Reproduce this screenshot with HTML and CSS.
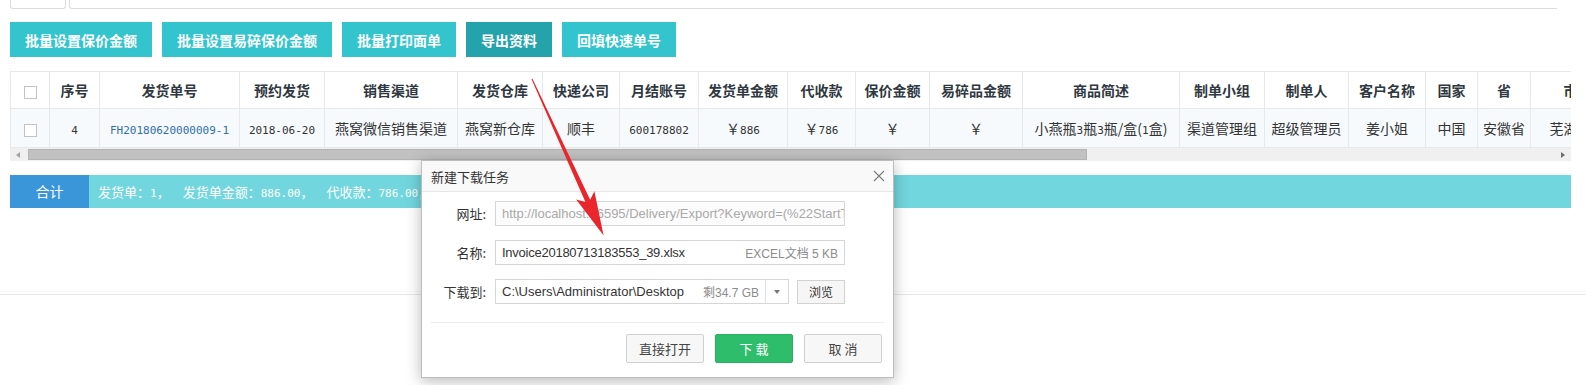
FILE: index.html
```html
<!DOCTYPE html>
<html lang="zh-CN">
<head>
  <meta charset="UTF-8" />
  <meta name="viewport" content="width=device-width, initial-scale=1.0" />
  <title>发货单</title>
  <link rel="stylesheet" href="styles.css">
</head>
<body>
  <div class="page">
    <div class="topbar">
      <div class="tab"></div>
      <div class="tab-line"></div>
    </div>

    <div class="toolbar">
      <button class="btn">批量设置保价金额</button>
      <button class="btn">批量设置易碎保价金额</button>
      <button class="btn">批量打印面单</button>
      <button class="btn btn-dark">导出资料</button>
      <button class="btn">回填快速单号</button>
    </div>

    <div class="grid">
      <table>
        <colgroup>
          <col style="width:39px"><col style="width:50px"><col style="width:140px"><col style="width:85px">
          <col style="width:133px"><col style="width:85px"><col style="width:77px"><col style="width:79px">
          <col style="width:89px"><col style="width:68px"><col style="width:74px"><col style="width:93px">
          <col style="width:157px"><col style="width:85px"><col style="width:84px"><col style="width:77px">
          <col style="width:52px"><col style="width:53px"><col style="width:80px">
        </colgroup>
        <thead>
          <tr>
            <th><span class="chk"></span></th>
            <th>序号</th>
            <th>发货单号</th>
            <th>预约发货</th>
            <th>销售渠道</th>
            <th>发货仓库</th>
            <th>快递公司</th>
            <th>月结账号</th>
            <th>发货单金额</th>
            <th>代收款</th>
            <th>保价金额</th>
            <th>易碎品金额</th>
            <th>商品简述</th>
            <th>制单小组</th>
            <th>制单人</th>
            <th>客户名称</th>
            <th>国家</th>
            <th>省</th>
            <th>市</th>
          </tr>
        </thead>
        <tbody>
          <tr>
            <td><span class="chk"></span></td>
            <td><span class="num">4</span></td>
            <td><a class="num link" href="#">FH20180620000009-1</a></td>
            <td><span class="num">2018-06-20</span></td>
            <td>燕窝微信销售渠道</td>
            <td>燕窝新仓库</td>
            <td>顺丰</td>
            <td><span class="num">600178802</span></td>
            <td>￥<span class="num">886</span></td>
            <td>￥<span class="num">786</span></td>
            <td>￥</td>
            <td>￥</td>
            <td>小燕瓶<span class="num">3</span>瓶<span class="num">3</span>瓶/盒(<span class="num">1</span>盒)</td>
            <td>渠道管理组</td>
            <td>超级管理员</td>
            <td>姜小姐</td>
            <td>中国</td>
            <td>安徽省</td>
            <td>芜湖市</td>
          </tr>
        </tbody>
      </table>
      <div class="hscroll">
        <span class="sb-btn"><i class="tri-left"></i></span>
        <div class="thumb"></div>
        <span class="sb-btn sb-right"><i class="tri-right"></i></span>
      </div>
    </div>

    <div class="totals">
      <div class="totals-label">合计</div>
      <div class="totals-text">
        <span class="sum-item">发货单<span class="fw">：</span><span class="num">1</span><span class="fw">，</span></span>
        <span class="sum-item">发货单金额<span class="fw">：</span><span class="num">886.00</span><span class="fw">，</span></span>
        <span class="sum-item">代收款<span class="fw">：</span><span class="num">786.00</span><span class="fw">，</span></span>
        <span class="sum-item">保价金额<span class="fw">：</span><span class="num">0.00</span><span class="fw">，</span></span>
        <span class="sum-item">易碎品金额<span class="fw">：</span><span class="num">0.00</span></span>
      </div>
    </div>

    <div class="footer-line"></div>
  </div>

  <div class="dialog">
    <div class="dlg-head">
      <span>新建下载任务</span>
      <svg class="dlg-close" width="12" height="12" viewBox="0 0 12 12">
        <path d="M1 1 L11 11 M11 1 L1 11" stroke="#7a7a7a" stroke-width="1.1" fill="none" />
      </svg>
    </div>
    <div class="dlg-body">
      <div class="field">
        <label>网址:</label>
        <div class="inp inp-ro">http://localhost:56595/Delivery/Export?Keyword=(%22StartTime%22:%22%22)</div>
      </div>
      <div class="field">
        <label>名称:</label>
        <div class="inp">
          <span class="val val-tight">Invoice20180713183553_39.xlsx</span>
          <span class="meta">EXCEL文档 5 KB</span>
        </div>
      </div>
      <div class="field">
        <label>下载到:</label>
        <div class="inp inp-path">
          <span class="val">C:\Users\Administrator\Desktop</span>
          <span class="meta">剩34.7 GB</span>
          <span class="drop"><i class="tri-down"></i></span>
        </div>
        <button class="browse">浏览</button>
      </div>
    </div>
    <div class="dlg-sep"></div>
    <div class="dlg-foot">
      <button>直接打开</button>
      <button class="primary">下 载</button>
      <button>取 消</button>
    </div>
  </div>

  <svg class="annot" width="1586" height="385" viewBox="0 0 1586 385">
    <g transform="translate(532 79) rotate(-24.6)">
      <polygon points="-0.5,0 0.5,0 2.6,134 10,128 0,172 -10,128 -2.6,134" fill="#e8262b" />
    </g>
  </svg>
</body>
</html>
```

FILE: styles.css
```css
* {
  box-sizing: border-box;
  margin: 0;
  padding: 0;
}
body {
  width: 1586px;
  height: 385px;
  overflow: hidden;
  position: relative;
  background: #fff;
  color: #333;
  font-family: "Noto Sans CJK SC", sans-serif;
  font-size: 14px;
}
.page {
  padding: 0 15px 0 10px;
}
.topbar {
  display: flex;
  gap: 3px;
  height: 9px;
}
.topbar .tab {
  width: 56px;
  border: 1px solid #dcdcdc;
  border-top: none;
  border-radius: 0 0 3px 3px;
}
.topbar .tab-line {
  width: 1488px;
  border: 1px solid #dcdcdc;
  border-top: none;
  border-right: none;
  border-radius: 0 0 0 3px;
}
.toolbar {
  display: flex;
  gap: 10px;
  margin-top: 13px;
}
.btn {
  height: 35px;
  padding: 0 15px;
  border: none;
  background: #33c4ce;
  color: #fff;
  font-family: "Noto Sans CJK SC", sans-serif;
  font-size: 14px;
  font-weight: bold;
}
.btn-dark {
  background: #25a3ac;
}
.grid {
  margin-top: 14px;
  width: 1561px;
  overflow: hidden;
}
.grid table {
  width: 1600px;
  table-layout: fixed;
  border-collapse: collapse;
}
.grid th,
.grid td {
  border: 1px solid #e6e8ea;
  text-align: center;
  white-space: nowrap;
  overflow: hidden;
  padding: 0 2px;
}
.grid th {
  height: 37px;
  font-weight: bold;
  color: #2f3740;
  background: #fff;
}
.grid td {
  height: 39px;
  background: #f6fafd;
  color: #333;
}
.num {
  font-family: "DejaVu Sans Mono", monospace;
  font-size: 11px;
}
.link {
  color: #2f6fad;
  text-decoration: none;
}
.chk {
  display: inline-block;
  width: 13px;
  height: 13px;
  border: 1px solid #c3c3c3;
  background: #fff;
  vertical-align: middle;
}
.hscroll {
  display: flex;
  align-items: center;
  height: 13px;
  background: #f0f0f0;
}
.sb-btn {
  width: 16px;
  height: 13px;
  display: flex;
  align-items: center;
  justify-content: center;
}
.sb-right {
  margin-left: auto;
}
.tri-left {
  border-right: 4px solid #a3a3a3;
  border-top: 3px solid transparent;
  border-bottom: 3px solid transparent;
}
.tri-right {
  border-left: 4px solid #6e6e6e;
  border-top: 3px solid transparent;
  border-bottom: 3px solid transparent;
}
.thumb {
  margin-left: 2px;
  width: 1059px;
  height: 11px;
  background: #c1c1c1;
  border: 1px solid #b3b3b3;
}
.totals {
  display: flex;
  margin-top: 14px;
  width: 1561px;
  height: 33px;
  line-height: 33px;
}
.totals-label {
  width: 79px;
  background: #3a96d9;
  color: #fff;
  text-align: center;
}
.totals-text {
  flex: 1;
  display: flex;
  gap: 13px;
  padding-left: 9px;
  background: #72d6de;
  color: #fff;
  font-size: 13px;
  white-space: nowrap;
}
.fw {
  display: inline-block;
  width: 13px;
}
.footer-line {
  margin: 86px -15px 0 -10px;
  border-top: 1px solid #e6e6e6;
  box-shadow: 0 -3px 0 #f7f7f7;
}

/* download dialog */
.dialog {
  position: absolute;
  left: 421px;
  top: 160px;
  width: 473px;
  height: 218px;
  background: #fff;
  border: 1px solid #bdbdbd;
  box-shadow: 0 3px 14px rgba(0, 0, 0, 0.28);
  font-family: "Liberation Sans", "Noto Sans CJK SC", sans-serif;
  font-size: 13px;
}
.dlg-head {
  height: 31px;
  display: flex;
  align-items: center;
  justify-content: space-between;
  padding: 0 8px 0 9px;
  border-bottom: 1px solid #e8e8e8;
  background: #f9f9f9;
  font-family: "Noto Sans CJK SC", sans-serif;
  font-size: 13px;
  color: #333;
}
.dlg-body {
  display: flex;
  flex-direction: column;
  gap: 14px;
  padding-top: 9px;
}
.field {
  display: flex;
  align-items: center;
}
.field label {
  width: 64px;
  margin-right: 9px;
  text-align: right;
  font-family: "Noto Sans CJK SC", sans-serif;
  font-size: 13px;
  color: #333;
}
.inp {
  width: 350px;
  height: 25px;
  display: flex;
  align-items: center;
  padding: 0 6px;
  border: 1px solid #d6d6d6;
  background: #fff;
  white-space: nowrap;
  overflow: hidden;
}
.inp-ro {
  color: #a9a9a9;
  background: #fcfcfc;
}
.inp .val {
  flex: 1;
  color: #333;
}
.inp .val-tight {
  letter-spacing: -0.25px;
}
.inp .meta {
  color: #8c8c8c;
  font-size: 12px;
}
.inp-path {
  width: 294px;
  padding-right: 0;
}
.inp-path .drop {
  width: 23px;
  height: 100%;
  margin-left: 6px;
  border-left: 1px solid #e0e0e0;
  display: flex;
  align-items: center;
  justify-content: center;
}
.tri-down {
  border-top: 4px solid #777;
  border-left: 3px solid transparent;
  border-right: 3px solid transparent;
}
.browse {
  width: 48px;
  height: 24px;
  margin-left: 8px;
  border: 1px solid #d2d2d2;
  background: #f6f6f6;
  color: #333;
  font-family: "Noto Sans CJK SC", sans-serif;
  font-size: 12px;
}
.dlg-sep {
  margin: 18px 9px 0;
  border-top: 1px solid #ececec;
}
.dlg-foot {
  display: flex;
  justify-content: flex-end;
  gap: 11px;
  padding: 11px 11px 0 0;
}
.dlg-foot button {
  width: 78px;
  height: 29px;
  border: 1px solid #d0d0d0;
  border-radius: 2px;
  background: #f7f7f7;
  color: #444;
  font-family: "Noto Sans CJK SC", sans-serif;
  font-size: 13px;
}
.dlg-foot .primary {
  background: #2dbd6b;
  border-color: #28b063;
  color: #fff;
}
.annot {
  position: absolute;
  left: 0;
  top: 0;
  pointer-events: none;
}
```
